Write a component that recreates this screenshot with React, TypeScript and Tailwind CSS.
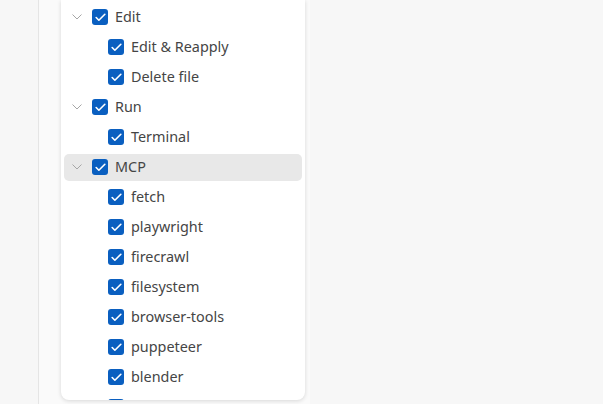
import { Check } from 'lucide-react';

type Item = { label: string; level: 0 | 1; active?: boolean };

const items: Item[] = [
  { label: 'Edit', level: 0 },
  { label: 'Edit & Reapply', level: 1 },
  { label: 'Delete file', level: 1 },
  { label: 'Run', level: 0 },
  { label: 'Terminal', level: 1 },
  { label: 'MCP', level: 0, active: true },
  { label: 'fetch', level: 1 },
  { label: 'playwright', level: 1 },
  { label: 'firecrawl', level: 1 },
  { label: 'filesystem', level: 1 },
  { label: 'browser-tools', level: 1 },
  { label: 'puppeteer', level: 1 },
  { label: 'blender', level: 1 },
  // only the top of this row's checkbox shows above the card edge
  { label: '', level: 1 },
];

function Box() {
  return (
    <span className="flex h-4 w-4 shrink-0 items-center justify-center rounded-[3px] bg-[#0a5fc0]">
      <Check size={13} strokeWidth={3} className="text-white" />
    </span>
  );
}

function Chevron() {
  return (
    <svg width="10" height="6" viewBox="0 0 10 6" className="shrink-0">
      <path d="M0.5 0.5 L5 5 L9.5 0.5" fill="none" stroke="#a6a6a6" strokeWidth="1" />
    </svg>
  );
}

export default function App() {
  return (
    <div className="flex h-[404px] w-[603px] overflow-hidden bg-[#f7f7f7] font-['Noto_Sans',sans-serif] text-[14.4px] text-[#454545]">
      <div className="w-[39px] shrink-0 border-r border-[#e5e5e5] bg-[#f7f7f7]" />
      <div className="h-full w-[271px] shrink-0 bg-[#fafafa] pl-[22px]">
        <div className="h-[400px] w-[244px] overflow-hidden rounded-b-[8px] bg-white pt-[2px] shadow-[0_1px_4px_rgba(0,0,0,0.14)]">
          {items.map((item, i) => (
            <div key={i} className="flex h-[30px] items-center px-[3px]">
              <div
                className={`flex h-[27px] w-full items-center rounded-[5px] ${item.active ? 'bg-[#e8e8e8]' : ''} ${item.level === 0 ? 'pl-[8px]' : 'pl-[44px]'}`}
              >
                {item.level === 0 && (
                  <span className="mr-[10px] flex">
                    <Chevron />
                  </span>
                )}
                <Box />
                {item.label && <span className="ml-[7px] leading-none">{item.label}</span>}
              </div>
            </div>
          ))}
        </div>
      </div>
      <div className="flex-1" />
    </div>
  );
}
